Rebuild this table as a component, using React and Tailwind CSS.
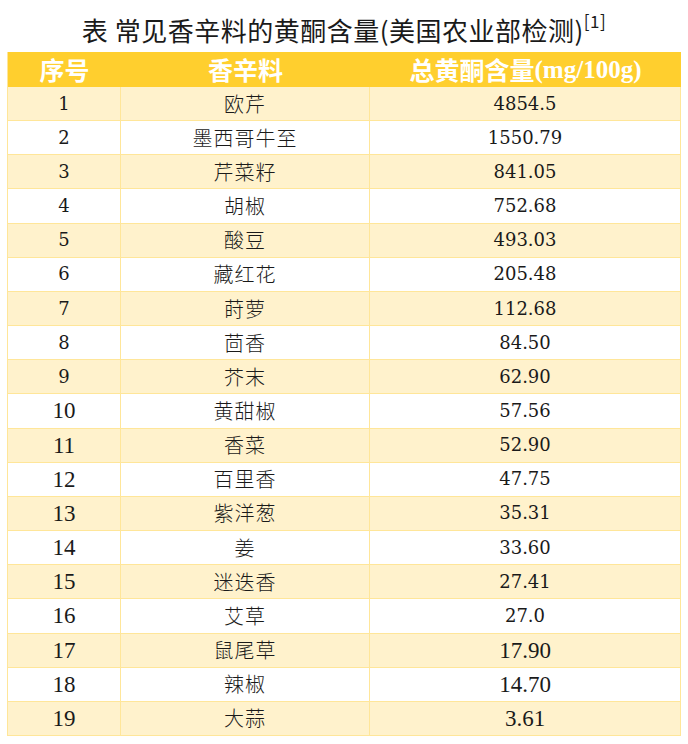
import React from "react";

// seq, name, value, seq font kind, value font kind (c = cambria-like, t = times)
const rows = [
  ["1", "欧芹", "4854.5", "c", "c"],
  ["2", "墨西哥牛至", "1550.79", "c", "c"],
  ["3", "芹菜籽", "841.05", "c", "c"],
  ["4", "胡椒", "752.68", "c", "c"],
  ["5", "酸豆", "493.03", "c", "c"],
  ["6", "藏红花", "205.48", "c", "c"],
  ["7", "莳萝", "112.68", "c", "c"],
  ["8", "茴香", "84.50", "c", "c"],
  ["9", "芥末", "62.90", "c", "c"],
  ["10", "黄甜椒", "57.56", "t", "c"],
  ["11", "香菜", "52.90", "t", "c"],
  ["12", "百里香", "47.75", "t", "c"],
  ["13", "紫洋葱", "35.31", "t", "c"],
  ["14", "姜", "33.60", "t", "c"],
  ["15", "迷迭香", "27.41", "t", "c"],
  ["16", "艾草", "27.0", "t", "c"],
  ["17", "鼠尾草", "17.90", "t", "t"],
  ["18", "辣椒", "14.70", "t", "t"],
  ["19", "大蒜", "3.61", "t", "t"],
];

const Num = ({ kind, children }) =>
  kind === "c" ? (
    <span className="text-[18px] leading-none font-['DejaVu_Serif',serif]">{children}</span>
  ) : (
    <span className="text-[23px] leading-none font-['Liberation_Serif',serif]">{children}</span>
  );

export default function App() {
  return (
    <div className="w-[688px] h-[744px] bg-white pt-[13px] text-[#1a1a1a]">
      <div className="h-[34px] flex items-center justify-center text-[26px] leading-none tracking-[0.5px] font-['Noto_Sans_CJK_SC',sans-serif]">
        表 常见香辛料的黄酮含量(美国农业部检测)
        <span className="self-start text-[17px] leading-none -mt-[1px]">[1]</span>
      </div>

      <div className="ml-[7px] mt-[5px] w-[674px] border-l border-[#ffe699]">
        <div className="flex h-[35px] bg-[#ffcf2e] text-white font-bold">
          <div className="w-[113px] flex items-center justify-center text-[25px] leading-none font-['Noto_Sans_CJK_SC',sans-serif]">
            序号
          </div>
          <div className="w-[249px] flex items-center justify-center text-[25px] leading-none font-['Noto_Sans_CJK_SC',sans-serif]">
            香辛料
          </div>
          <div className="flex-1 flex items-center justify-center whitespace-nowrap">
            <span className="text-[25px] leading-none font-['Noto_Sans_CJK_SC',sans-serif]">总黄酮含量</span>
            <span className="text-[25px] leading-none font-['Liberation_Serif',serif]">(mg/100g)</span>
          </div>
        </div>

        {rows.map(([n, name, val, nk, vk], i) => (
          <div
            key={n}
            className={`flex h-[34.16px] border-b border-[#ffe699] ${
              i % 2 === 0 ? "bg-[#fff2cc]" : "bg-white"
            }`}
          >
            <div className="w-[113px] flex items-center justify-center border-r border-[#ffe699]">
              <Num kind={nk}>{n}</Num>
            </div>
            <div className="w-[249px] flex items-center justify-center border-r border-[#ffe699] text-[20px] leading-none font-light tracking-[1px] font-['Noto_Sans_CJK_SC',sans-serif]">
              {name}
            </div>
            <div className="flex-1 flex items-center justify-center border-r border-[#ffe699]">
              <Num kind={vk}>{val}</Num>
            </div>
          </div>
        ))}
      </div>
    </div>
  );
}
